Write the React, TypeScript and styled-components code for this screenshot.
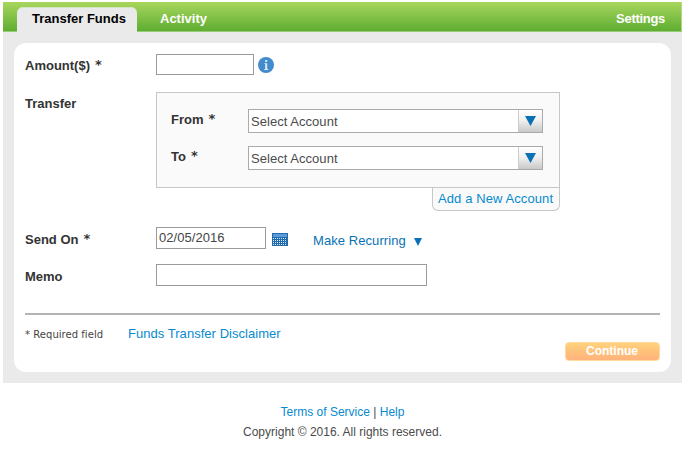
import React from "react";
import styled, { createGlobalStyle } from "styled-components";

const GlobalStyle = createGlobalStyle`
  * { box-sizing: border-box; }
  body {
    margin: 0;
    background: #fff;
    color: #333;
    font: 13px/16px "Liberation Sans", Arial, sans-serif;
    overflow: hidden;
  }
`;

const Page = styled.div`
  width: 685px;
  height: 453px;
  padding: 2px 3px 0;
`;

const Header = styled.header`
  display: flex;
  align-items: flex-start;
  width: 679px;
  height: 30px;
  padding: 5px 17px 0 14px;
  background: linear-gradient(#a9d65d, #5bac30);
  box-shadow: inset 0 -1px #98cc78, inset -1px 0 #b0da88;
`;

const Tab = styled.a<{ $active?: boolean; $spacing?: number }>`
  height: 25px;
  width: ${(p) => (p.$active ? "120px" : "auto")};
  padding-left: ${(p) => (p.$active ? "15px" : "23px")};
  padding-top: 4px;
  border-radius: 6px 6px 0 0;
  background: ${(p) => (p.$active ? "#eaeaea" : "none")};
  box-shadow: ${(p) => (p.$active ? "inset 0 1px #d5e5c4" : "none")};
  color: ${(p) => (p.$active ? "#000" : "#fff")};
  font-weight: bold;
  letter-spacing: ${(p) => p.$spacing ?? 0}px;
  white-space: nowrap;
  &:last-child { margin-left: auto; }
`;

const Body = styled.main`
  width: 679px;
  height: 351px;
  padding: 11px;
  background: #eaeaea;
`;

const Card = styled.form`
  width: 657px;
  height: 329px;
  padding: 11px;
  border-radius: 12px;
  background: #fff;
`;

const Row = styled.div<{ $height: number }>`
  display: flex;
  align-items: flex-start;
  height: ${(p) => p.$height}px;
`;

const Label = styled.label<{ $width?: number; $top?: number }>`
  flex: none;
  display: flex;
  width: ${(p) => p.$width ?? 131}px;
  padding-top: ${(p) => p.$top ?? 4}px;
  font-weight: bold;
  white-space: nowrap;
`;

const Asterisk = styled.span`
  margin: -1px 0 1px 5px;
  font: bold 13px/16px "DejaVu Sans", sans-serif;
`;

const Field = styled.input<{ $width: number; $height?: number }>`
  flex: none;
  width: ${(p) => p.$width}px;
  height: ${(p) => p.$height ?? 22}px;
  padding: 0 2px 1px;
  border: 1px solid #9b9b9b;
  border-radius: 0;
  background: #fff;
  color: #444;
  font: 13px "Liberation Sans", Arial, sans-serif;
  letter-spacing: 0.05px;
`;

const InfoIcon = styled.svg`
  margin: 3px 0 0 4px;
`;

const CalendarIcon = styled.svg`
  margin: 6px 0 0 6px;
`;

const Accounts = styled.section`
  display: flex;
  flex-direction: column;
  align-items: flex-end;
`;

const AccountBox = styled.div`
  display: flex;
  flex-direction: column;
  gap: 13px;
  width: 404px;
  height: 96px;
  padding: 16px 0 0 14px;
  border: 1px solid #c7c7c7;
  background: #fafafa;
`;

const Select = styled.button`
  display: flex;
  justify-content: space-between;
  width: 295px;
  height: 24px;
  padding: 0;
  border: 1px solid #aaa;
  background: #fff;
  color: #4b4b4b;
  font: 13px/23px "Liberation Sans", Arial, sans-serif;
  letter-spacing: 0.04px;
  text-align: left;
`;

const SelectText = styled.span`
  padding-left: 2px;
`;

const SelectArrow = styled.span`
  display: flex;
  justify-content: center;
  align-items: center;
  width: 24px;
  height: 22px;
  border-left: 1px solid #ccc;
  background: linear-gradient(#fff, #f1f1f1 45%, #c9c9c9);
`;

const Link = styled.a<{ $dark?: boolean; $spacing?: number }>`
  color: ${(p) => (p.$dark ? "#0871b5" : "#078ad0")};
  letter-spacing: ${(p) => p.$spacing ?? 0}px;
  white-space: nowrap;
`;

const AddAccount = styled.div`
  width: 128px;
  height: 23px;
  padding: 3px 0 0 5px;
  border: 1px solid #c7c7c7;
  border-top: 0;
  border-radius: 0 0 6px 6px;
  background: #fafafa;
`;

const Recurring = styled.div`
  display: flex;
  align-items: center;
  gap: 8px;
  padding: 6px 0 0 25px;
  svg { margin-top: 2px; }
`;

const Rule = styled.hr`
  width: 635px;
  height: 2px;
  margin: 0;
  border: 0;
  background: #b4b4b4;
`;

const Notes = styled.div`
  display: flex;
  align-items: flex-start;
  padding-top: 11px;
`;

const Required = styled.span`
  width: 103px;
  padding-top: 2px;
  color: #444;
  font: 10px/14px "DejaVu Sans", sans-serif;
  letter-spacing: 0.04px;
  white-space: nowrap;
`;

const Continue = styled.button`
  width: 95px;
  height: 19px;
  margin: 16px 0 0 auto;
  padding: 0 1px 1px 0;
  border: 1px solid #ffdb9b;
  border-radius: 4px;
  background: linear-gradient(#ffd27b, #ffb27c);
  color: #fff;
  font: bold 12px/15px "Liberation Sans", Arial, sans-serif;
  letter-spacing: 0;
`;

const Footer = styled.footer`
  display: flex;
  flex-direction: column;
  align-items: center;
  padding-top: 19px;
  color: #4b4b4b;
  font-size: 12px;
  line-height: 20px;
`;

const Triangle = ({ width, height }: { width: number; height: number }) => (
  <svg width={width} height={height} viewBox="0 0 11 10" preserveAspectRatio="none">
    <path d="M0 0H11L5.5 10Z" fill="#0871b5" />
  </svg>
);

const AccountSelect = ({ label }: { label: string }) => (
  <Row $height={24}>
    <Label $width={77} $top={3}>{label}<Asterisk>*</Asterisk></Label>
    <Select type="button">
      <SelectText>Select Account</SelectText>
      <SelectArrow><Triangle width={11} height={10} /></SelectArrow>
    </Select>
  </Row>
);

const dotColumns = [1.5, 3.5, 5.5, 7.5, 9.5, 11.5, 13.5];
const dotRows = [5.5, 7.5, 9.5, 11.5];

export default function App() {
  return (
    <>
      <GlobalStyle />
      <Page>
        <Header>
          <Tab $active>Transfer Funds</Tab>
          <Tab>Activity</Tab>
          <Tab $spacing={-0.3}>Settings</Tab>
        </Header>
        <Body>
          <Card>
            <Row $height={38}>
              <Label>Amount($)<Asterisk>*</Asterisk></Label>
              <Field $width={98} $height={21} />
              <InfoIcon width="16" height="16" viewBox="0 0 16 16">
                <circle cx="8" cy="8" r="8" fill="#438bcd" />
                <path d="M7.2 3h2v2h-2zM6.2 6.2h3v5.9h1v.9H6.2v-.9h1V7.1h-1z" fill="#d8eafa" />
              </InfoIcon>
            </Row>
            <Row $height={135}>
              <Label>Transfer</Label>
              <Accounts>
                <AccountBox>
                  <AccountSelect label="From" />
                  <AccountSelect label="To" />
                </AccountBox>
                <AddAccount><Link $spacing={0.1}>Add a New Account</Link></AddAccount>
              </Accounts>
            </Row>
            <Row $height={37}>
              <Label $top={5}>Send On<Asterisk>*</Asterisk></Label>
              <Field $width={110} defaultValue="02/05/2016" />
              <CalendarIcon width="16" height="13" viewBox="0 0 16 13">
                <path d="M0 0H16V13H0Z" fill="#216bad" />
                <path d="M1 1H15V4H1Z" fill="#5c9bd9" />
                {dotRows.map((y) =>
                  dotColumns.map((x) => (
                    <rect key={`${x}-${y}`} x={x - 0.5} y={y - 0.5} width="1" height="1" fill="#d6e8f8" />
                  ))
                )}
              </CalendarIcon>
              <Recurring>
                <Link $dark $spacing={0.07}>Make Recurring</Link>
                <Triangle width={8} height={8} />
              </Recurring>
            </Row>
            <Row $height={49}>
              <Label $top={5}>Memo</Label>
              <Field $width={271} />
            </Row>
            <Rule />
            <Notes>
              <Required>* Required field</Required>
              <Link $spacing={0.04}>Funds Transfer Disclaimer</Link>
              <Continue type="button">Continue</Continue>
            </Notes>
          </Card>
        </Body>
        <Footer>
          <span><Link>Terms of Service</Link> | <Link>Help</Link></span>
          <span>Copyright © 2016. All rights reserved.</span>
        </Footer>
      </Page>
    </>
  );
}
